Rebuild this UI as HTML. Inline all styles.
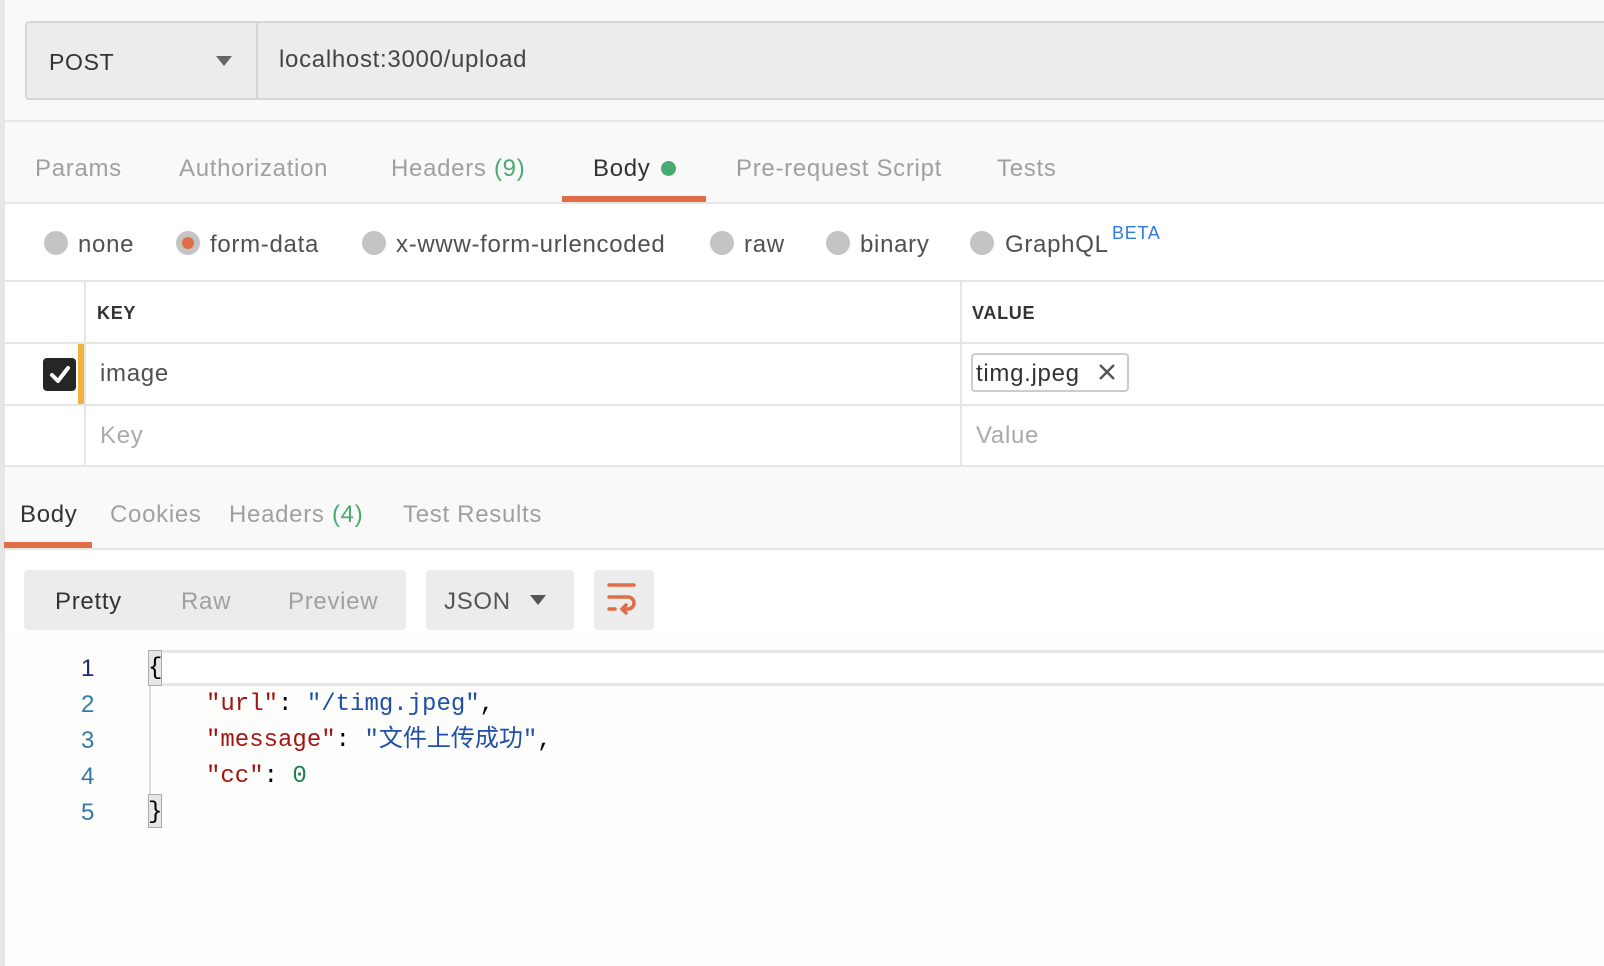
<!DOCTYPE html>
<html><head><meta charset="utf-8"><style>
*{margin:0;padding:0;box-sizing:border-box}
body{width:1604px;height:966px;position:relative;overflow:hidden;background:#fff;font-family:"Liberation Sans","Noto Sans CJK SC",sans-serif;color:#505050}
.a{position:absolute}
.t{position:absolute;font-size:24px;white-space:nowrap;line-height:1;letter-spacing:.7px}
.g{color:#a0a0a0}
.r{position:absolute;width:24px;height:24px;border-radius:50%;background:#c4c4c4}
.m{font-family:"Liberation Mono","Noto Sans CJK SC",monospace;font-size:24px;position:absolute;white-space:pre;line-height:1}
.k{color:#a31515}.s{color:#1f4fa8}.n{color:#1e8050}
</style></head><body>
<div class="a" style="left:0;top:0;width:1604px;height:203px;background:#f9f9f9"></div>
<div class="a" style="left:0;top:0;width:5px;height:966px;background:#e6e6e6"></div>
<div class="a" style="left:25px;top:21px;width:1600px;height:79px;background:#ececec;border:2px solid #d6d6d6;border-radius:4px"></div>
<div class="a" style="left:256px;top:22px;width:2px;height:77px;background:#d6d6d6"></div>
<div class="t" style="left:49px;top:51px;color:#333;font-size:23px">POST</div>
<div class="a" style="left:216px;top:56px;border-left:8px solid transparent;border-right:8px solid transparent;border-top:10px solid #666"></div>
<div class="t" style="left:279px;top:48px;color:#444">localhost:3000/upload</div>
<div class="a" style="left:5px;top:120px;width:1600px;height:2px;background:#e8e8e8"></div>
<div class="t g" style="left:35px;top:157px">Params</div>
<div class="t g" style="left:179px;top:157px">Authorization</div>
<div class="t g" style="left:391px;top:157px">Headers <span style="color:#4aab72">(9)</span></div>
<div class="t" style="left:593px;top:157px;color:#333">Body</div>
<div class="a" style="left:661px;top:161px;width:15px;height:15px;border-radius:50%;background:#4aab72"></div>
<div class="t g" style="left:736px;top:157px">Pre-request Script</div>
<div class="t g" style="left:997px;top:157px">Tests</div>
<div class="a" style="left:5px;top:202px;width:1600px;height:2px;background:#e6e6e6"></div>
<div class="a" style="left:562px;top:196px;width:144px;height:6px;background:#e06d45"></div>
<div class="r" style="left:44px;top:231px"></div><div class="t" style="left:78px;top:233px">none</div>
<div class="r" style="left:176px;top:231px"></div><div class="a" style="left:182px;top:237px;width:12px;height:12px;border-radius:50%;background:#e06d45"></div><div class="t" style="left:210px;top:233px">form-data</div>
<div class="r" style="left:362px;top:231px"></div><div class="t" style="left:396px;top:233px">x-www-form-urlencoded</div>
<div class="r" style="left:710px;top:231px"></div><div class="t" style="left:744px;top:233px">raw</div>
<div class="r" style="left:826px;top:231px"></div><div class="t" style="left:860px;top:233px">binary</div>
<div class="r" style="left:970px;top:231px"></div><div class="t" style="left:1005px;top:233px">GraphQL</div>
<div class="t" style="left:1112px;top:224px;font-size:18px;color:#2f7be0">BETA</div>
<div class="a" style="left:5px;top:280px;width:1600px;height:2px;background:#e6e6e6"></div>
<div class="a" style="left:5px;top:342px;width:1600px;height:2px;background:#e6e6e6"></div>
<div class="a" style="left:5px;top:404px;width:1600px;height:2px;background:#e6e6e6"></div>
<div class="a" style="left:5px;top:465px;width:1600px;height:2px;background:#e6e6e6"></div>
<div class="a" style="left:84px;top:281px;width:2px;height:185px;background:#e6e6e6"></div>
<div class="a" style="left:960px;top:281px;width:2px;height:185px;background:#e6e6e6"></div>
<div class="t" style="left:97px;top:304px;font-size:18px;font-weight:bold;color:#333">KEY</div>
<div class="t" style="left:972px;top:304px;font-size:18px;font-weight:bold;color:#333">VALUE</div>
<div class="a" style="left:43px;top:358px;width:33px;height:33px;border-radius:4px;background:#262626"></div>
<svg class="a" style="left:43px;top:358px" width="33" height="33"><path d="M9 17 L15 23 L25 10" stroke="#fff" stroke-width="4" fill="none" stroke-linecap="round" stroke-linejoin="round"/></svg>
<div class="a" style="left:78px;top:344px;width:6px;height:60px;background:#f2b33d"></div>
<div class="t" style="left:100px;top:362px">image</div>
<div class="a" style="left:971px;top:353px;width:158px;height:39px;border:2px solid #ccc;border-radius:4px"></div>
<div class="t" style="left:976px;top:362px;color:#333">timg.jpeg</div>
<svg class="a" style="left:1097px;top:362px" width="20" height="20"><path d="M3 3L17 17M17 3L3 17" stroke="#555" stroke-width="2.4"/></svg>
<div class="t g" style="left:100px;top:424px;color:#aaa">Key</div>
<div class="t g" style="left:976px;top:424px;color:#aaa">Value</div>
<div class="a" style="left:5px;top:467px;width:1600px;height:82px;background:#f9f9f9"></div>
<div class="t" style="left:20px;top:503px;color:#333">Body</div>
<div class="t g" style="left:110px;top:503px">Cookies</div>
<div class="t g" style="left:229px;top:503px">Headers <span style="color:#4aab72">(4)</span></div>
<div class="t g" style="left:403px;top:503px">Test Results</div>
<div class="a" style="left:5px;top:548px;width:1600px;height:2px;background:#e6e6e6"></div>
<div class="a" style="left:4px;top:542px;width:88px;height:6px;background:#e06d45"></div>
<div class="a" style="left:24px;top:570px;width:382px;height:60px;background:#ececec;border-radius:4px"></div>
<div class="t" style="left:55px;top:590px;color:#333">Pretty</div>
<div class="t g" style="left:181px;top:590px">Raw</div>
<div class="t g" style="left:288px;top:590px">Preview</div>
<div class="a" style="left:426px;top:570px;width:148px;height:60px;background:#ececec;border-radius:4px"></div>
<div class="t" style="left:444px;top:590px;color:#555">JSON</div>
<div class="a" style="left:530px;top:595px;border-left:8px solid transparent;border-right:8px solid transparent;border-top:10px solid #555"></div>
<div class="a" style="left:594px;top:570px;width:60px;height:60px;background:#ececec;border-radius:4px"></div>
<svg class="a" style="left:594px;top:570px" width="60" height="60"><g stroke="#e06d45" stroke-width="3.5" fill="none" stroke-linecap="round"><path d="M15 15H40"/><path d="M15 27H34a6 6 0 0 1 0 12H29"/><path d="M15 39H21"/><path d="M32 35L28 39L32 43"/></g></svg>
<div class="a" style="left:5px;top:630px;width:1600px;height:336px;background:#fdfdfb"></div>
<div class="a" style="left:149px;top:650px;width:1460px;height:36px;background:#fff;border-top:3px solid #e8e8e8;border-bottom:3px solid #e8e8e8"></div>
<div class="a" style="left:148px;top:650px;width:14px;height:36px;background:#e6e6e6;border:1px solid #aaa"></div>
<div class="a" style="left:149px;top:686px;width:2px;height:108px;background:#ddd"></div>
<div class="a" style="left:148px;top:794px;width:14px;height:34px;background:#e6e6e6;border:1px solid #aaa"></div>
<div class="m" style="left:81px;top:657px;color:#1a2a6c;font-family:'Liberation Sans',sans-serif">1</div>
<div class="m" style="left:81px;top:693px;color:#3579a6;font-family:'Liberation Sans',sans-serif">2</div>
<div class="m" style="left:81px;top:729px;color:#3579a6;font-family:'Liberation Sans',sans-serif">3</div>
<div class="m" style="left:81px;top:765px;color:#3579a6;font-family:'Liberation Sans',sans-serif">4</div>
<div class="m" style="left:81px;top:801px;color:#3579a6;font-family:'Liberation Sans',sans-serif">5</div>
<div class="m" style="left:148px;top:657px;color:#000">{</div>
<div class="m" style="left:206px;top:693px"><span class="k">"url"</span><span style="color:#000">: </span><span class="s">"/timg.jpeg"</span><span style="color:#000">,</span></div>
<div class="m" style="left:206px;top:729px"><span class="k">"message"</span><span style="color:#000">: </span><span class="s">"文件上传成功"</span><span style="color:#000">,</span></div>
<div class="m" style="left:206px;top:765px"><span class="k">"cc"</span><span style="color:#000">: </span><span class="n">0</span></div>
<div class="m" style="left:148px;top:801px;color:#000">}</div>
</body></html>
